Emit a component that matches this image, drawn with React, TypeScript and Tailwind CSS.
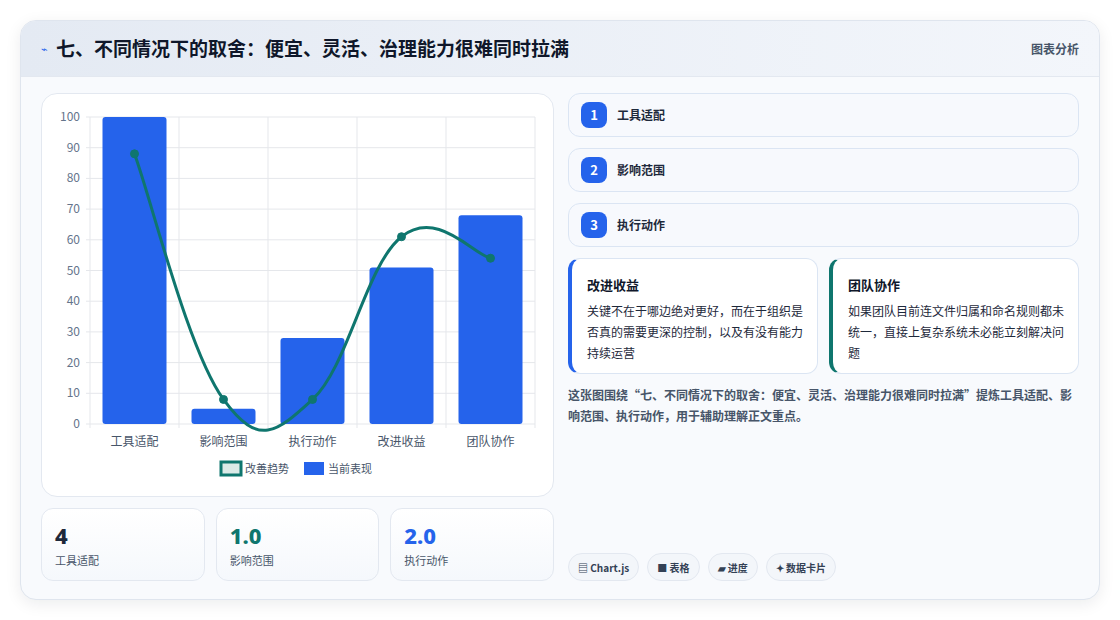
import React from "react";

const F = { fontFamily: '"Noto Sans CJK SC", "Noto Sans", sans-serif' };

function Chart() {
  const L = 48, T = 23, R = 493, B = 330;
  const h = B - T;
  const cw = (R - L) / 5;
  const bars = [100, 5, 28, 51, 68];
  const line = [88, 8, 8, 61, 54];
  const labels = ["工具适配", "影响范围", "执行动作", "改进收益", "团队协作"];
  const y = (v: number) => B - (v / 100) * h;
  const pts = line.map((v, i) => [L + cw * (i + 0.5), y(v)]);
  let d = `M${pts[0][0]},${pts[0][1]}`;
  const t = 0.4;
  for (let i = 0; i < pts.length - 1; i++) {
    const p0 = pts[i - 1] || pts[i];
    const p1 = pts[i];
    const p2 = pts[i + 1];
    const p3 = pts[i + 2] || p2;
    const c1 = [p1[0] + ((p2[0] - p0[0]) * t) / 2, p1[1] + ((p2[1] - p0[1]) * t) / 2];
    const c2 = [p2[0] - ((p3[0] - p1[0]) * t) / 2, p2[1] - ((p3[1] - p1[1]) * t) / 2];
    d += ` C${c1[0]},${c1[1]} ${c2[0]},${c2[1]} ${p2[0]},${p2[1]}`;
  }
  return (
    <svg width="513" height="402" className="block" style={{ fontFamily: '"Noto Sans CJK SC", sans-serif' }}>
      {Array.from({ length: 11 }).map((_, i) => (
        <g key={i}>
          <line x1={L - 4} x2={R} y1={y(i * 10)} y2={y(i * 10)} stroke="#e5e7eb" />
          <text x={L - 10} y={y(i * 10) + 4} fontSize="12" fill="#64748b" textAnchor="end">{i * 10}</text>
        </g>
      ))}
      {Array.from({ length: 6 }).map((_, i) => (
        <line key={i} x1={L + cw * i} x2={L + cw * i} y1={T} y2={B + 4} stroke="#e5e7eb" />
      ))}
      {bars.map((v, i) => (
        <rect key={i} x={L + cw * i + 12.5} y={y(v)} width={64} height={B - y(v)} rx="3" fill="#2563eb" />
      ))}
      <path d={d} fill="none" stroke="#0f766e" strokeWidth="3" />
      {pts.map((p, i) => (
        <circle key={i} cx={p[0]} cy={p[1]} r="4" fill="#0f766e" stroke="#0f766e" />
      ))}
      {labels.map((l, i) => (
        <text key={i} x={L + cw * (i + 0.5)} y={352} fontSize="12" fill="#475569" textAnchor="middle">{l}</text>
      ))}
      <rect x="179" y="368" width="20" height="13" fill="#dbeae7" stroke="#0f766e" strokeWidth="3" />
      <text x="203" y="379" fontSize="11" fill="#475569">改善趋势</text>
      <rect x="262" y="368" width="20" height="13" fill="#2563eb" />
      <text x="286" y="379" fontSize="11" fill="#475569">当前表现</text>
    </svg>
  );
}

export default function App() {
  const items = ["工具适配", "影响范围", "执行动作"];
  return (
    <div className="w-[1120px] h-[620px] bg-white p-5" style={F}>
      <div className="w-full h-[580px] rounded-2xl border border-[#dfe5ee] bg-[#f8fafd] shadow-[0_4px_16px_rgba(15,23,42,0.08)] overflow-hidden flex flex-col">
        <div className="h-[56px] flex items-center justify-between px-5 bg-gradient-to-r from-[#e4eaf3] to-[#f3f6fb] border-b border-[#e3e8f0]">
          <div className="flex items-center gap-2">
            <span className="text-[#2563eb] text-[11px]">⌁</span>
            <span className="text-[19px] font-bold text-[#0f172a]">七、不同情况下的取舍：便宜、灵活、治理能力很难同时拉满</span>
          </div>
          <span className="text-[12px] font-semibold text-[#475569]">图表分析</span>
        </div>
        <div className="flex gap-[14px] px-5 pt-4">
          <div className="w-[513px] flex flex-col gap-[11px]">
            <div className="h-[404px] rounded-2xl border border-[#e3e8f0] bg-white">
              <Chart />
            </div>
            <div className="flex gap-[11px]">
              {[
                ["4", "工具适配", "text-[#1e293b]"],
                ["1.0", "影响范围", "text-[#0f766e]"],
                ["2.0", "执行动作", "text-[#2563eb]"],
              ].map(([v, l, c]) => (
                <div key={l} className="flex-1 h-[73px] rounded-xl border border-[#e3e8f0] bg-gradient-to-b from-white to-[#f5f8fc] px-[13px] pt-3">
                  <div className={`text-[22px] font-extrabold leading-[28px] ${c}`} style={{ fontFamily: '"Noto Sans", sans-serif' }}>{v}</div>
                  <div className="text-[11px] text-[#475569] mt-[3px]">{l}</div>
                </div>
              ))}
            </div>
          </div>
          <div className="w-[514px] flex flex-col">
            <div className="flex flex-col gap-[11px]">
              {items.map((t, i) => (
                <div key={t} className="h-[44px] rounded-xl border border-[#dbe5f3] bg-[#f7f9fd] flex items-center px-3 gap-[10px]">
                  <span className="w-[26px] h-[26px] rounded-lg bg-[#2563eb] text-white text-[13px] font-bold flex items-center justify-center">{i + 1}</span>
                  <span className="text-[12px] font-semibold text-[#1e293b]">{t}</span>
                </div>
              ))}
            </div>
            <div className="flex gap-[11px] mt-[11px]">
              {[
                ["改进收益", "关键不在于哪边绝对更好，而在于组织是否真的需要更深的控制，以及有没有能力持续运营", "border-l-[#2563eb]"],
                ["团队协作", "如果团队目前连文件归属和命名规则都未统一，直接上复杂系统未必能立刻解决问题", "border-l-[#0f766e]"],
              ].map(([t, b, c]) => (
                <div key={t} className={`flex-1 h-[116px] rounded-xl border border-[#dbe5f3] border-l-4 ${c} bg-white pl-[15px] pr-3 pt-[16px]`}>
                  <div className="text-[13px] font-bold text-[#0f172a]">{t}</div>
                  <div className="text-[12px] leading-[21px] text-[#1e293b] mt-[5px]">{b}</div>
                </div>
              ))}
            </div>
            <div className="text-[12px] leading-[21px] text-[#475569] font-semibold mt-[10px]">
              这张图围绕“七、不同情况下的取舍：便宜、灵活、治理能力很难同时拉满”提炼工具适配、影响范围、执行动作，用于辅助理解正文重点。
            </div>
            <div className="flex-1" />
            <div className="flex gap-2 mt-auto pt-[127px]">
              {["▤ Chart.js", "■ 表格", "▰ 进度", "✦ 数据卡片"].map((c) => (
                <span key={c} className="h-[28px] px-[9px] rounded-full border border-[#e3e8f0] bg-[#f3f6fa] text-[10px] font-bold text-[#334155] flex items-center">{c}</span>
              ))}
            </div>
          </div>
        </div>
      </div>
    </div>
  );
}
